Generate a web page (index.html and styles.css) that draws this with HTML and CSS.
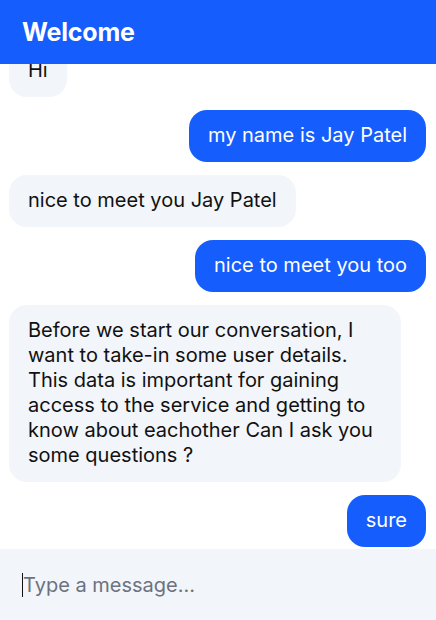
FILE: index.html
```
<!DOCTYPE html>
<html lang="en">
<head>
<meta charset="utf-8">
<title>Welcome</title>
<link rel="stylesheet" href="styles.css">
</head>
<body>
<div class="app">
  <header class="header"><h1 class="title">Welcome</h1></header>
  <main class="messages">
    <div class="msg bot">Hi</div>
    <div class="msg user">my name is Jay Patel</div>
    <div class="msg bot">nice to meet you Jay Patel</div>
    <div class="msg user">nice to meet you too</div>
    <div class="msg bot">Before we start our conversation, I want to take-in some user details. This data is important for gaining access to the service and getting to know about eachother Can I ask you some questions ?</div>
    <div class="msg user">sure</div>
  </main>
  <footer class="composer">
    <span class="caret"></span>
    <input class="input" type="text" placeholder="Type a message...">
  </footer>
</div>
</body>
</html>
```
FILE: styles.css
```
* { box-sizing: border-box; }
html, body { margin: 0; padding: 0; height: 100%; }
body {
  font-family: Inter, "Noto Sans", "Liberation Sans", sans-serif;
  background: #ffffff;
  color: #111111;
}
.app {
  height: 620px;
  display: flex;
  flex-direction: column;
}
.header {
  height: 64px;
  flex: none;
  background: #155dfc;
  display: flex;
  align-items: center;
  padding: 0 22px;
}
.title {
  margin: 0;
  color: #ffffff;
  font-size: 25px;
  font-weight: 700;
  letter-spacing: -0.2px;
}
.messages {
  flex: 1;
  min-height: 0;
  overflow: hidden;
  display: flex;
  flex-direction: column;
  justify-content: flex-end;
  gap: 13px;
  padding: 0 10px 2px 9px;
}
.msg {
  flex: none;
  max-width: 392px;
  padding: 13px 19px 14px;
  font-size: 20px;
  line-height: 25px;
  border-radius: 18px;
}
.bot {
  align-self: flex-start;
  background: #f2f5f9;
  color: #111111;
}
.user {
  align-self: flex-end;
  background: #155dfc;
  color: #ffffff;
}
.composer {
  height: 71px;
  flex: none;
  background: #f2f5f9;
  display: flex;
  align-items: center;
  padding: 0 22px;
}
.caret {
  width: 1px;
  height: 24px;
  background: #111111;
  flex: none;
}
.input {
  flex: 1;
  border: none;
  outline: none;
  background: transparent;
  font-family: inherit;
  font-size: 20px;
  color: #111111;
  padding: 0;
}
.input::placeholder { color: #6b7280; }
```
